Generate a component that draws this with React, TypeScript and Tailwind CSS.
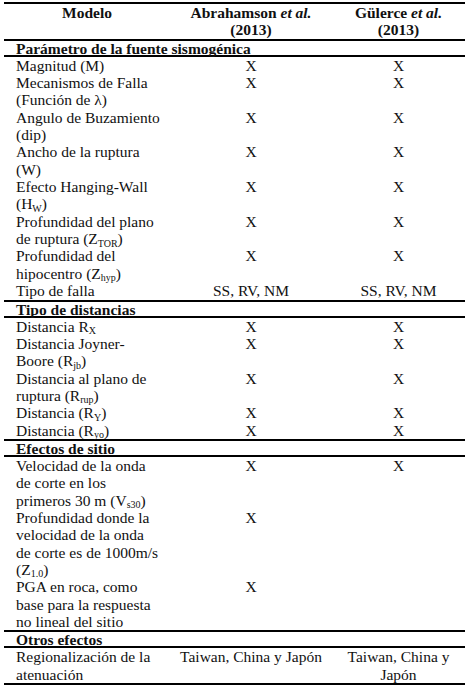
import React from 'react'

type Row = {
  label: React.ReactNode
  a?: React.ReactNode
  b?: React.ReactNode
}

type Section = {
  title: string
  rows: Row[]
}

const Sub = ({ children }: { children: React.ReactNode }) => (
  <sub className="text-[10px]">{children}</sub>
)

const sections: Section[] = [
  {
    title: 'Parámetro de la fuente sismogénica',
    rows: [
      { label: 'Magnitud (M)', a: 'X', b: 'X' },
      { label: <>Mecanismos de Falla<br />(Función de λ)</>, a: 'X', b: 'X' },
      { label: <>Angulo de Buzamiento<br />(dip)</>, a: 'X', b: 'X' },
      { label: <>Ancho de la ruptura<br />(W)</>, a: 'X', b: 'X' },
      { label: <>Efecto Hanging-Wall<br />(H<Sub>W</Sub>)</>, a: 'X', b: 'X' },
      { label: <>Profundidad del plano<br />de ruptura (Z<Sub>TOR</Sub>)</>, a: 'X', b: 'X' },
      { label: <>Profundidad del<br />hipocentro (Z<Sub>hyp</Sub>)</>, a: 'X', b: 'X' },
      { label: 'Tipo de falla', a: 'SS, RV, NM', b: 'SS, RV, NM' },
    ],
  },
  {
    title: 'Tipo de distancias',
    rows: [
      { label: <>Distancia R<Sub>X</Sub></>, a: 'X', b: 'X' },
      { label: <>Distancia Joyner-<br />Boore (R<Sub>jb</Sub>)</>, a: 'X', b: 'X' },
      { label: <>Distancia al plano de<br />ruptura (R<Sub>rup</Sub>)</>, a: 'X', b: 'X' },
      { label: <>Distancia (R<Sub>Y</Sub>)</>, a: 'X', b: 'X' },
      { label: <>Distancia (R<Sub>yo</Sub>)</>, a: 'X', b: 'X' },
    ],
  },
  {
    title: 'Efectos de sitio',
    rows: [
      {
        label: <>Velocidad de la onda<br />de corte en los<br />primeros 30 m (V<Sub>s30</Sub>)</>,
        a: 'X',
        b: 'X',
      },
      {
        label: <>Profundidad donde la<br />velocidad de la onda<br />de corte es de 1000m/s<br />(Z<Sub>1.0</Sub>)</>,
        a: 'X',
      },
      {
        label: <>PGA en roca, como<br />base para la respuesta<br />no lineal del sitio</>,
        a: 'X',
      },
    ],
  },
  {
    title: 'Otros efectos',
    rows: [
      {
        label: <>Regionalización de la<br />atenuación</>,
        a: 'Taiwan, China y Japón',
        b: <>Taiwan, China y<br />Japón</>,
      },
    ],
  },
]

export default function App() {
  return (
    <div className="bg-white pt-[2px] pl-[4px] text-[#111] text-[15.5px] leading-[17.35px] font-['Liberation_Serif','Times_New_Roman',serif]">
      <div className="w-[461px] border-t-2 border-black">
        {/* Header */}
        <div className="grid grid-cols-[166px_162px_133px] border-b-2 border-black font-bold text-center">
          <div>Modelo</div>
          <div>
            Abrahamson <span className="italic">et al.</span>
            <br />
            (2013)
          </div>
          <div>
            Gülerce <span className="italic">et al.</span>
            <br />
            (2013)
          </div>
        </div>

        {sections.map((section) => (
          <div key={section.title}>
            <div className="h-[16px] leading-[16px] pl-[12px] font-bold border-b-2 border-black whitespace-nowrap">
              {section.title}
            </div>
            <div className="border-b-2 border-black">
              {section.rows.map((row, i) => (
                <div key={i} className="grid grid-cols-[166px_162px_133px]">
                  <div className="pl-[12px] whitespace-nowrap">{row.label}</div>
                  <div className="text-center whitespace-nowrap">{row.a}</div>
                  <div className="text-center whitespace-nowrap">{row.b}</div>
                </div>
              ))}
            </div>
          </div>
        ))}
      </div>
    </div>
  )
}
